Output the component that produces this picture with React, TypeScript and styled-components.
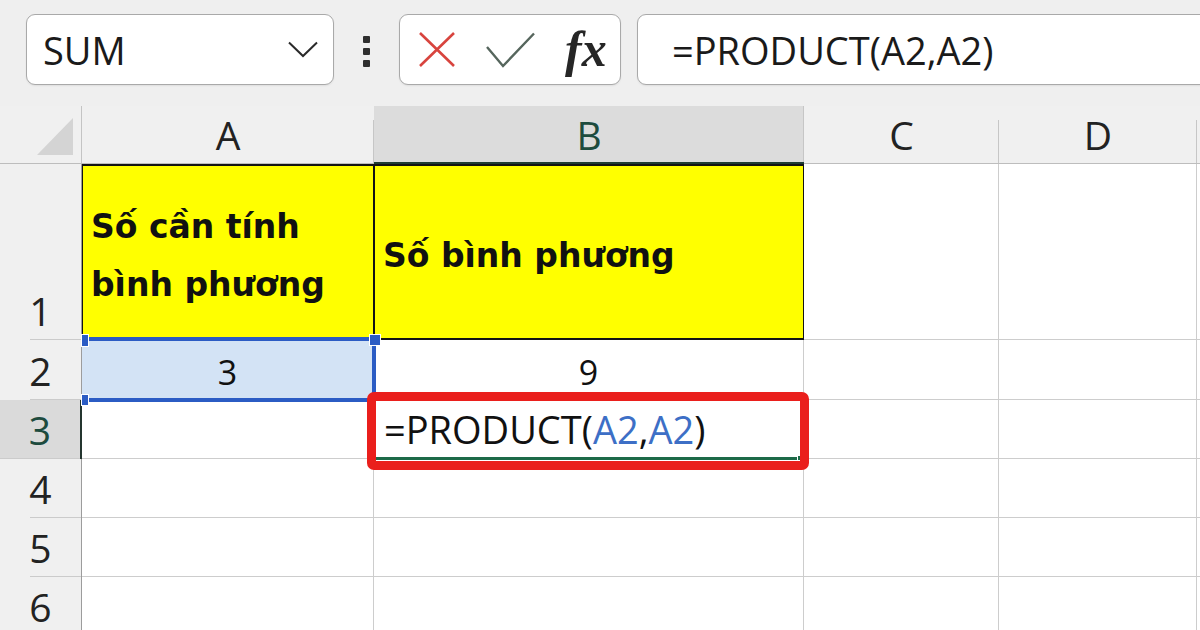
import styled, { createGlobalStyle } from "styled-components";

const GlobalStyle = createGlobalStyle`
    html, body {
        margin: 0;
        padding: 0;
    }
    body {
        width: 1200px;
        height: 630px;
        overflow: hidden;
        background: #efefef;
        font-family: "Open Sans", sans-serif;
        color: #1f1f1f;
    }
`;

const Page = styled.div`
    display: flex;
    flex-direction: column;
    width: 1200px;
    height: 630px;
    overflow: hidden;
`;

const Toolbar = styled.div`
    flex: none;
    height: 106px;
    box-sizing: border-box;
    padding: 14px 0 21px 26px;
    display: flex;
    align-items: center;
    background: #efefef;
    overflow: hidden;
`;

const Box = styled.div<{ $width: number }>`
    flex: none;
    width: ${(p) => p.$width}px;
    height: 71px;
    box-sizing: border-box;
    display: flex;
    align-items: center;
    background: #fff;
    border: 1px solid #a9a9a9;
    border-radius: 9px;
    box-shadow: 0 1px 2px rgba(0, 0, 0, 0.07);
`;

const NameBox = styled(Box)`
    justify-content: space-between;
    padding: 0 15px 0 16px;
`;

const ButtonsBox = styled(Box)`
    padding-left: 18px;
    gap: 30px;
`;

const FormulaBox = styled(Box)`
    margin-left: 16px;
    padding-left: 34px;
`;

const BarText = styled.span`
    font-size: 38px;
    color: #1a1a1a;
    white-space: nowrap;
`;

const Dots = styled.div`
    flex: none;
    display: flex;
    flex-direction: column;
    gap: 5px;
    margin: 3px 29px 0;
`;

const Dot = styled.span`
    width: 7px;
    height: 7px;
    background: #2f2f2f;
    border-radius: 1px;
`;

const Fx = styled.span`
    font-family: "Liberation Serif", "DejaVu Serif", serif;
    font-style: italic;
    font-weight: bold;
    font-size: 50px;
    color: #262626;
    margin-top: -2px;
`;

const Sheet = styled.div`
    flex: 1;
    display: grid;
    grid-template-columns: 82px 292px 430px 195px 198px 1fr;
    grid-template-rows: 58px 176px 60px 59px 59px 59px 59px;
    background: #fff;
`;

const Corner = styled.div`
    background: #f0f0f0;
    border-right: 1px solid #c4c4c4;
    border-bottom: 1px solid #bdbdbd;
    box-sizing: border-box;
`;

const ColHead = styled.div<{ $active?: boolean }>`
    position: relative;
    display: flex;
    align-items: center;
    justify-content: center;
    box-sizing: border-box;
    font-size: 39px;
    background: ${(p) => (p.$active ? "#dcdcdc" : "#f0f0f0")};
    color: ${(p) => (p.$active ? "#1d4b3e" : "#222")};
    border-bottom: ${(p) =>
        p.$active ? "2px solid #1f3d33" : "1px solid #bdbdbd"};

    &::after {
        content: "";
        position: absolute;
        right: 0;
        bottom: 0;
        top: ${(p) => (p.$active ? "0" : "14px")};
        width: 1px;
        background: #c6c6c6;
    }
`;

const RowHead = styled.div<{ $active?: boolean }>`
    position: relative;
    display: flex;
    align-items: flex-end;
    justify-content: center;
    box-sizing: border-box;
    padding-bottom: 2px;
    font-size: 39px;
    line-height: 54px;
    background: ${(p) => (p.$active ? "#dadada" : "#f0f0f0")};
    color: ${(p) => (p.$active ? "#1d4b3e" : "#222")};
    border-right: ${(p) =>
        p.$active ? "2px solid #24352f" : "1px solid #9c9c9c"};

    &::after {
        content: "";
        position: absolute;
        left: ${(p) => (p.$active ? "0" : "30px")};
        right: 0;
        bottom: 0;
        height: 1px;
        background: #cbcbcb;
    }
`;

type Fill = "yellow" | "select" | "none";

const Cell = styled.div<{ $fill?: Fill; $center?: boolean; $bold?: boolean }>`
    position: relative;
    display: flex;
    align-items: center;
    justify-content: ${(p) => (p.$center ? "center" : "flex-start")};
    box-sizing: border-box;
    padding: ${(p) =>
        p.$bold ? "8px 0 0 8px" : p.$center ? "4px 0 0" : "0 0 0 10px"};
    background: ${(p) =>
        p.$fill === "yellow"
            ? "#ffff00"
            : p.$fill === "select"
            ? "#d3e3f5"
            : "#fff"};
    border-right: 1px solid #cdcdcd;
    border-bottom: 1px solid #cdcdcd;
    ${(p) =>
        p.$fill === "yellow" &&
        `border: solid #141414; border-width: 2px 1px 2px 1px;`}
    font-family: ${(p) =>
        p.$bold ? `"DejaVu Sans", sans-serif` : `"Open Sans", sans-serif`};
    font-weight: ${(p) => (p.$bold ? 700 : 400)};
    font-size: ${(p) => (p.$bold ? "33px" : p.$center ? "34px" : "38px")};
    line-height: ${(p) => (p.$bold ? "58px" : "normal")};
    color: #111;
    white-space: pre-line;
`;

const ActiveCell = styled(Cell)`
    z-index: 3;
`;

const SelectedCell = styled(Cell)`
    z-index: 2;
`;

const SelectionFrame = styled.div`
    position: absolute;
    top: -3px;
    left: 0;
    right: -3px;
    bottom: -3px;
    border: 4px solid #2b5cc4;
    border-left: none;
    pointer-events: none;
`;

const Handle = styled.span<{ $pos: "tl" | "tr" | "bl" }>`
    position: absolute;
    background: #2b5cc4;
    border: 1px solid #fff;
    ${(p) =>
        p.$pos === "tl"
            ? "left: -1px; top: -6px; width: 6px; height: 11px;"
            : p.$pos === "tr"
            ? "right: -8px; top: -6px; width: 10px; height: 10px;"
            : "left: -1px; bottom: -7px; width: 6px; height: 10px;"}
`;

const RedBox = styled.div`
    position: absolute;
    left: -7px;
    top: -8px;
    right: -6px;
    bottom: -12px;
    border: 9px solid #ea1f1c;
    border-radius: 7px;
    pointer-events: none;
`;

const ActiveLine = styled.div`
    position: absolute;
    left: 2px;
    right: 6px;
    bottom: -2px;
    height: 3px;
    background: #1d6a48;

    &::after {
        content: "";
        position: absolute;
        right: -5px;
        top: -1px;
        width: 4px;
        height: 4px;
        background: #1d6a48;
        border-left: 1px solid #fff;
    }
`;

const Ref = styled.span`
    color: #3d6fc6;
`;

const columns = ["A", "B", "C", "D", ""];

export default function App() {
    return (
        <Page>
            <GlobalStyle />
            <Toolbar>
                <NameBox $width={308}>
                    <BarText>SUM</BarText>
                    <svg width="30" height="17" viewBox="0 0 30 17">
                        <polyline
                            points="1,1.5 15,15 29,1.5"
                            fill="none"
                            stroke="#2a2a2a"
                            strokeWidth="2"
                        />
                    </svg>
                </NameBox>
                <Dots>
                    <Dot />
                    <Dot />
                    <Dot />
                </Dots>
                <ButtonsBox $width={222}>
                    <svg width="38" height="37" viewBox="0 0 38 37">
                        <path
                            d="M2 2 L36 35 M36 2 L2 35"
                            stroke="#d8443e"
                            strokeWidth="2.6"
                            fill="none"
                        />
                    </svg>
                    <svg width="49" height="36" viewBox="0 0 49 36">
                        <polyline
                            points="1,15 17,34 48,1.5"
                            fill="none"
                            stroke="#56665d"
                            strokeWidth="2.4"
                        />
                    </svg>
                    <Fx>fx</Fx>
                </ButtonsBox>
                <FormulaBox $width={620}>
                    <BarText>=PRODUCT(A2,A2)</BarText>
                </FormulaBox>
            </Toolbar>

            <Sheet>
                <Corner>
                    <svg width="82" height="58" viewBox="0 0 82 58">
                        <polygon points="37,49 73,12 73,49" fill="#d4d4d4" />
                    </svg>
                </Corner>
                {columns.map((c) => (
                    <ColHead key={c || "x"} $active={c === "B"}>
                        {c}
                    </ColHead>
                ))}

                <RowHead>1</RowHead>
                <Cell $fill="yellow" $bold>
                    {"Số cần tính\nbình phương"}
                </Cell>
                <Cell $fill="yellow" $bold>
                    Số bình phương
                </Cell>
                <Cell />
                <Cell />
                <Cell />

                <RowHead>2</RowHead>
                <SelectedCell $fill="select" $center>
                    3
                    <SelectionFrame />
                    <Handle $pos="tl" />
                    <Handle $pos="tr" />
                    <Handle $pos="bl" />
                </SelectedCell>
                <Cell $center>9</Cell>
                <Cell />
                <Cell />
                <Cell />

                <RowHead $active>3</RowHead>
                <Cell />
                <ActiveCell>
                    <span>
                        =PRODUCT(<Ref>A2</Ref>,<Ref>A2</Ref>)
                    </span>
                    <ActiveLine />
                    <RedBox />
                </ActiveCell>
                <Cell />
                <Cell />
                <Cell />

                {[4, 5, 6].map((n) => (
                    <>
                        <RowHead key={`h${n}`}>{n}</RowHead>
                        {columns.map((c) => (
                            <Cell key={`${n}${c}`} />
                        ))}
                    </>
                ))}
            </Sheet>
        </Page>
    );
}
